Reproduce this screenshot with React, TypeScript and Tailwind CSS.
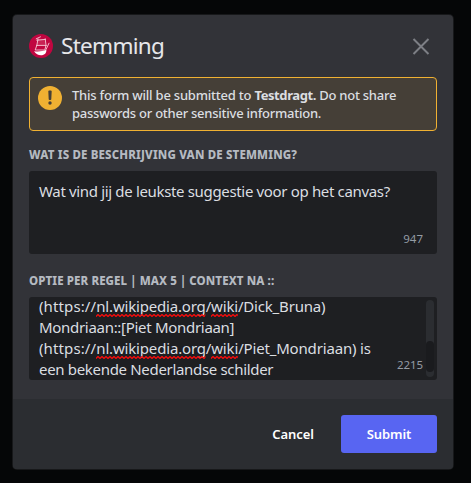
import type { ReactNode } from 'react';

function ShipLogo() {
  return (
    <svg className="size-6 shrink-0" viewBox="0 0 24 24" fill="none">
      <circle cx="12" cy="12" r="12" fill="#c00640" />
      <path d="M9 4.500 15.500 5.500 16.500 11.500 8 11.500Z" fill="#c82354" />
      <g stroke="#f6ccd8" strokeWidth="0.9" strokeLinecap="round" strokeLinejoin="round">
        <path d="M7.200 4.800 11.500 2.800M9 5l-1.200 6.500M7.800 6.200l8.600-.8M16.200 4.800l.8 6.400M7.800 11.400h9.200M7.800 11.400 6.200 16h9.600l1.200-4.600M20 9.200l-3 6.300" />
      </g>
      <path d="M5 17.200c4.500 1 9-.2 12.400-1.400.2 2.900-1.400 5-4.300 5.400-3.300.4-6-.9-8.100-4Z" fill="#fff" />
    </svg>
  );
}

function WarningIcon() {
  return (
    <svg className="size-6 shrink-0" viewBox="0 0 24 24">
      <circle cx="12" cy="12" r="12" fill="#f0b132" />
      <path d="M10.300 5.300c0-.5.4-.9.9-.9h1.600c.5 0 .9.4.9.9l-.4 7.900c0 .5-.4.800-.8.800h-1c-.4 0-.8-.3-.8-.8Z" fill="#453f37" />
      <circle cx="12" cy="17" r="1.700" fill="#453f37" />
    </svg>
  );
}

function Misspelled({ id, children }: { id: string; children: ReactNode }) {
  return (
    <span className="relative inline-block">
      {children}
      <svg className="absolute left-0 bottom-0 w-full h-[3px]">
        <defs>
          <pattern id={id} width="4" height="3" patternUnits="userSpaceOnUse">
            <path d="M-1 1.500 0 2.500 2 .5 4 2.500 5 1.500" fill="none" stroke="#f40b0b" strokeWidth="1.300" />
          </pattern>
        </defs>
        <rect width="100%" height="3" fill={`url(#${id})`} />
      </svg>
    </span>
  );
}

export default function App() {
  return (
    <div className="h-[483px] w-[471px] bg-[#050607] pl-[13px] pt-[15px] font-['Noto_Sans',sans-serif]">
      <div className="flex h-[454px] w-[440px] flex-col overflow-hidden rounded-[4px] bg-[#323338] shadow-[0_0_0_1px_#17181a]">
        <div className="flex h-[62px] items-center pl-4 pr-[23px]">
          <ShipLogo />
          <h1 className="ml-2 flex-1 text-[22.5px] leading-[30px] tracking-[-0.7px] text-[#e6e7ea]">Stemming</h1>
          <svg className="size-[18px]" viewBox="0 0 18 18" fill="none" stroke="#7d7f85" strokeWidth="2">
            <path d="M1.500 2l15 15M16.500 2l-15 15" />
          </svg>
        </div>

        <div className="h-[322px] shrink-0 px-4">
          <div className="flex h-[54px] rounded-[4px] border border-[#f0b132] bg-[#453f37] pl-2 pt-2">
            <WarningIcon />
            <div className="ml-[10px] text-[13px] font-medium leading-[18px] text-[#dbdee1] whitespace-nowrap">
              <p>
                <span className="tracking-[-0.22px]">This form will be submitted to </span>
                <b className="font-bold tracking-[-0.4px]">Testdragt.</b>
                <span className="tracking-[-0.24px]"> Do not share</span>
              </p>
              <p className="tracking-[-0.25px]">passwords or other sensitive information.</p>
            </div>
          </div>

          <label className="mt-4 block h-6 text-[11.5px] font-extrabold leading-4 tracking-[0.16px] text-[#b5bac1] whitespace-nowrap">
            WAT IS DE BESCHRIJVING VAN DE STEMMING?
          </label>
          <div className="flex h-[83px] justify-between rounded-[3px] bg-[#1e1f22] pl-[10px] pr-[14px] text-[#dbdee1]">
            <p className="pt-[10px] text-[15px] leading-[21px] tracking-[-0.34px] whitespace-nowrap">
              Wat vind jij de leukste suggestie voor op het canvas?
            </p>
            <span className="self-end pb-[7px] text-[11.5px] leading-4 text-[#949ba4]">947</span>
          </div>

          <label className="mt-[19px] block h-6 text-[11.5px] font-extrabold leading-4 tracking-[0.1px] text-[#b5bac1] whitespace-nowrap">
            OPTIE PER REGEL | MAX 5 | CONTEXT NA ::
          </label>
          <div className="flex h-[83px] overflow-hidden rounded-[3px] bg-[#1e1f22] pl-[10px] pr-[3px] text-[#dbdee1]">
            <div className="-mt-px w-[358px] text-[15px] leading-[21px] whitespace-nowrap">
              <p className="tracking-[-0.18px]">
                <span className="tracking-[0.12px]">(https://</span><Misspelled id="a">nl.wikipedia.org</Misspelled>/<Misspelled id="b">wiki</Misspelled>/Dick_Bruna)
              </p>
              <p className="tracking-[-0.3px]">Mondriaan::[Piet Mondriaan]</p>
              <p className="tracking-[-0.17px]">
                <span className="tracking-[0.12px]">(https://</span><Misspelled id="c">nl.wikipedia.org</Misspelled>/<Misspelled id="d">wiki</Misspelled>/Piet_Mondriaan) is
              </p>
              <p className="tracking-[-0.32px]">een bekende Nederlandse schilder</p>
            </div>
            <span className="self-end pb-[7px] text-[11.5px] leading-4 tracking-[-0.05px] text-[#949ba4]">2215</span>
            <div className="ml-auto mt-[3px] h-[77px] w-2 rounded bg-[#2b2d31] pt-[41px]">
              <div className="h-[31px] rounded bg-[#1a1b1e]" />
            </div>
          </div>
        </div>

        <div className="flex flex-1 items-center justify-end bg-[#2b2d31] pr-4 text-[13px] font-semibold text-white">
          <button className="mr-[27px] pt-px tracking-[-0.05px]">Cancel</button>
          <button className="h-[38px] w-24 rounded-[3px] bg-[#5865f2] pt-px tracking-[-0.05px]">Submit</button>
        </div>
      </div>
    </div>
  );
}
